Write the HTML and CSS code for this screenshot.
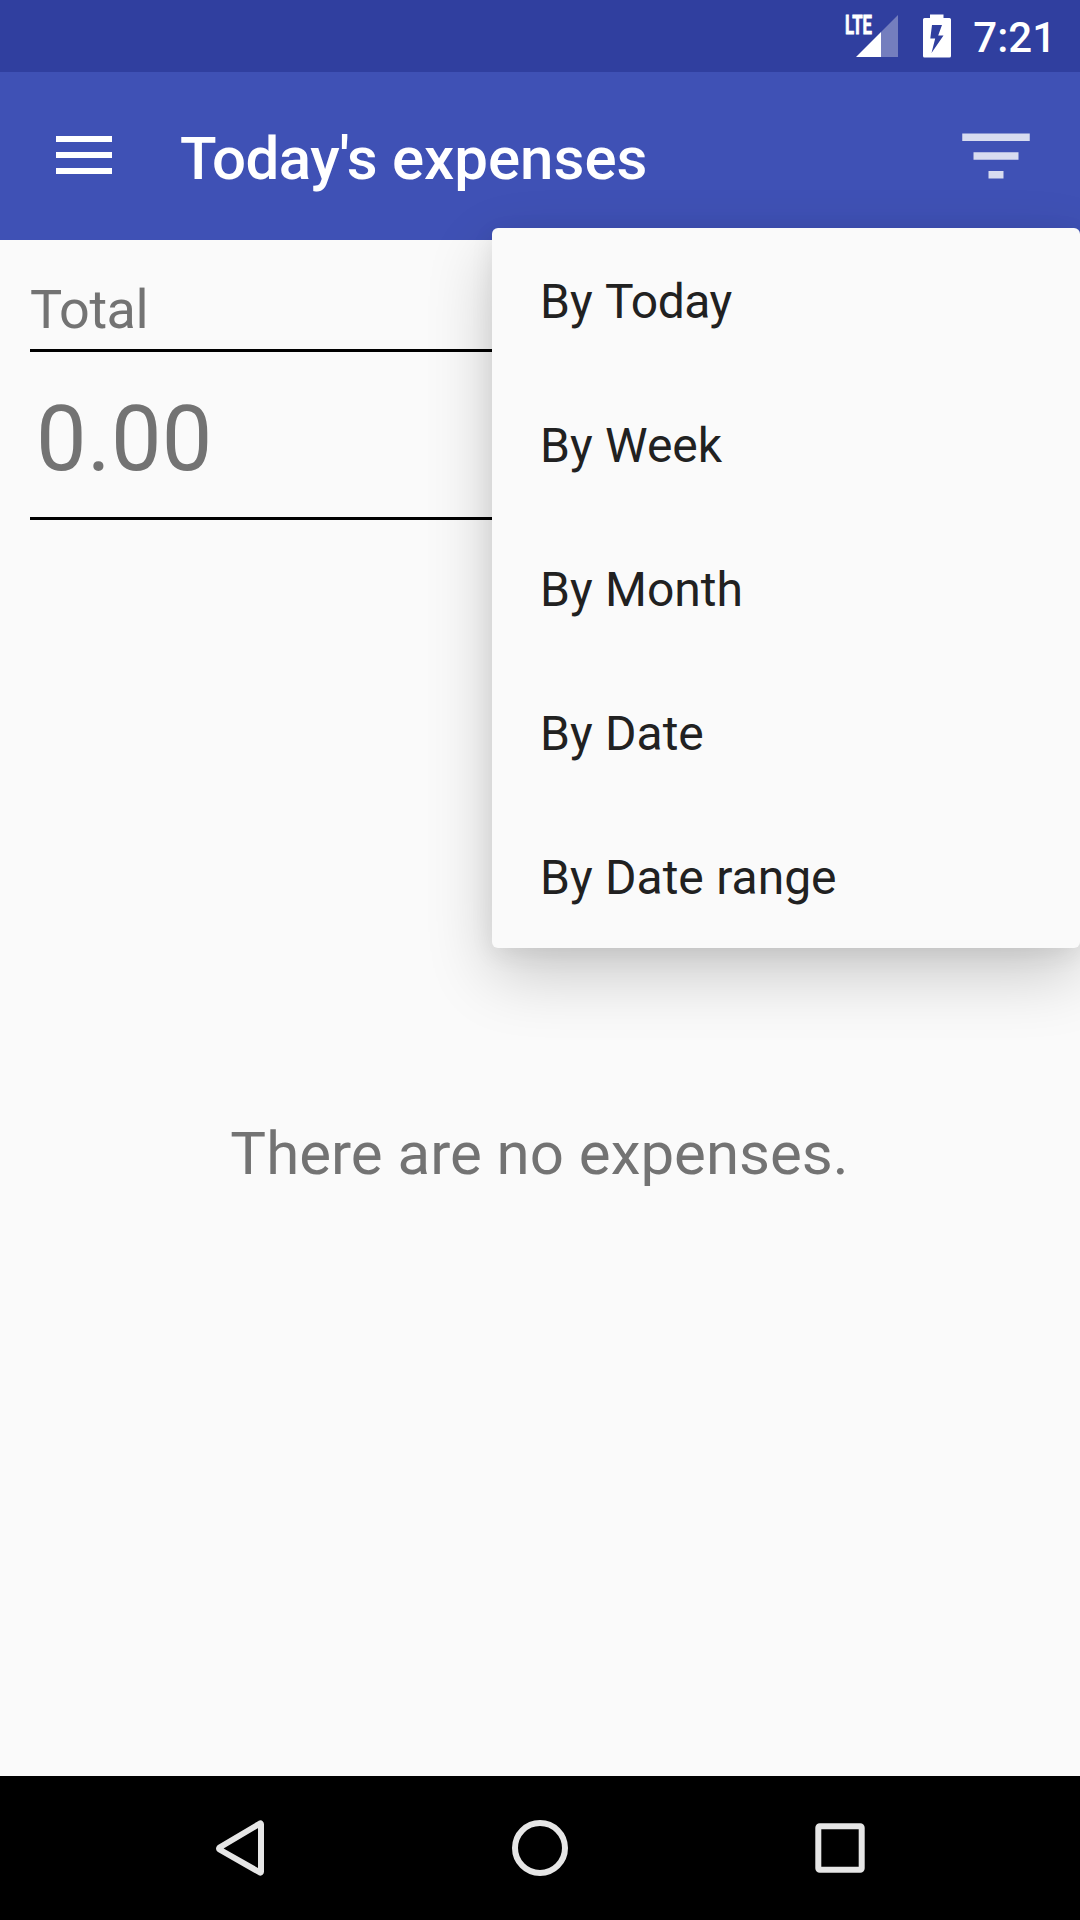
FILE: index.html
```html
<!DOCTYPE html>
<html lang="en">
<head>
<meta charset="utf-8">
<title>Today's expenses</title>
<link rel="stylesheet" href="styles.css">
</head>
<body>
<div class="screen">
  <div class="status-bar">
    <svg class="signal" width="54" height="60" viewBox="0 -12 54 60">
      <text class="lte" x="0" y="21.5" textLength="27" lengthAdjust="spacingAndGlyphs">LTE</text>
      <path d="M11 45L36 20V45z" fill="#fff"/>
      <path d="M36 20L53 3V45H36z" fill="#fff" fill-opacity=".33"/>
    </svg>
    <svg class="battery" width="28" height="60" viewBox="0 -12 28 60">
      <path fill="#fff" fill-rule="evenodd" d="M7 2.5H20.5V6H26.5Q28 6 28 7.500V44Q28 45.500 26.500 45.500H1.500Q0 45.500 0 44V7.500Q0 6 1.500 6H7zM9 13L7.300 26.500H12.200L8.500 41L20.500 23.500H15.200L19 13z"/>
    </svg>
    <span class="clock">7:21</span>
  </div>
  <header class="app-bar">
    <svg class="nav-icon" width="56" height="38" viewBox="0 0 56 38" fill="#fff">
      <path d="M0 0h56v6H0zM0 16h56v6H0zM0 32h56v6H0z"/>
    </svg>
    <h1 class="title"><span class="tight">Today's</span> expenses</h1>
    <svg class="filter-icon" width="90" height="90" viewBox="0 0 24 24">
      <path fill="#fff" fill-opacity=".8" d="M10 18h4v-2h-4v2zM3 6v2h18V6H3zm3 7h12v-2H6v2z"/>
    </svg>
  </header>
  <main class="content">
    <div class="label tight">Total</div>
    <div class="amount">0.00</div>
    <p class="empty">There are no expenses.</p>
  </main>
  <nav class="nav-bar">
    <svg width="60" height="60" viewBox="0 0 60 60"><path stroke-linejoin="round" d="M9.500 29.500L50 5.500Q51 5 51 6.500V53.500Q51 55 50 54.500L9.500 31.500Q8.500 30.500 9.500 29.500z"/></svg>
    <svg width="60" height="60" viewBox="0 0 60 60"><circle cx="30" cy="30" r="25"/></svg>
    <svg width="60" height="60" viewBox="0 0 60 60"><rect x="8.300" y="8.300" width="43.400" height="43.400" rx="1.500"/></svg>
  </nav>
  <ul class="menu">
    <li>By <span class="tight">Today</span></li>
    <li>By Week</li>
    <li>By Month</li>
    <li>By Date</li>
    <li>By Date range</li>
  </ul>
</div>
</body>
</html>
```
FILE: styles.css
```css
* { box-sizing: border-box; }
body {
  margin: 0;
  font-family: Roboto, sans-serif;
}
.screen {
  position: relative;
  display: flex;
  flex-direction: column;
  width: 1080px;
  height: 1920px;
  overflow: hidden;
  background: #fafafa;
}
.status-bar {
  display: flex;
  justify-content: flex-end;
  height: 72px;
  padding-right: 24px;
  background: #303f9f;
  color: #fff;
}
.battery { margin-left: 24px; }
.lte {
  font: 700 26px Roboto, sans-serif;
  fill: #fff;
  stroke: #fff;
  stroke-width: .8px;
}
.clock {
  margin-left: 22px;
  padding-top: 12px;
  font-size: 42px;
  font-weight: 500;
  line-height: 51px;
}
.tight { letter-spacing: -.5px; }
.app-bar {
  display: flex;
  align-items: center;
  height: 168px;
  padding: 0 39px 0 56px;
  background: #3f51b5;
  color: #fff;
}
.nav-icon { margin-bottom: 2px; }
.title {
  flex: 1;
  margin: 0;
  padding: 5px 0 0 68px;
  font-size: 60px;
  font-weight: 500;
  line-height: 70px;
}
.content {
  display: flex;
  flex: 1;
  flex-direction: column;
  padding: 36px 30px 0;
  color: #737373;
}
.label {
  height: 76px;
  border-bottom: 3px solid #000;
  font-size: 54px;
  line-height: 67px;
}
.amount {
  height: 168px;
  padding: 35px 6px 0;
  border-bottom: 3px solid #000;
  font-size: 90px;
  line-height: 106px;
  letter-spacing: .3px;
}
.empty {
  margin: 599px 1px 0 0;
  font-size: 60px;
  line-height: 70px;
  text-align: center;
}
.nav-bar {
  display: flex;
  justify-content: center;
  align-items: center;
  gap: 240px;
  height: 144px;
  background: #000;
}
.nav-bar svg {
  fill: none;
  stroke: #e6e6e6;
  stroke-width: 6;
}
.menu {
  position: absolute;
  top: 228px;
  left: 492px;
  width: 588px;
  margin: 0;
  padding: 0;
  border-radius: 6px;
  background: #fafafa;
  box-shadow: 0 26px 66px rgba(0, 0, 0, .2), 0 6px 24px rgba(0, 0, 0, .07);
  color: #212121;
  list-style: none;
}
.menu li {
  height: 144px;
  padding: 3px 48px 0;
  font-size: 48px;
  line-height: 141px;
  word-spacing: .5px;
}
```
